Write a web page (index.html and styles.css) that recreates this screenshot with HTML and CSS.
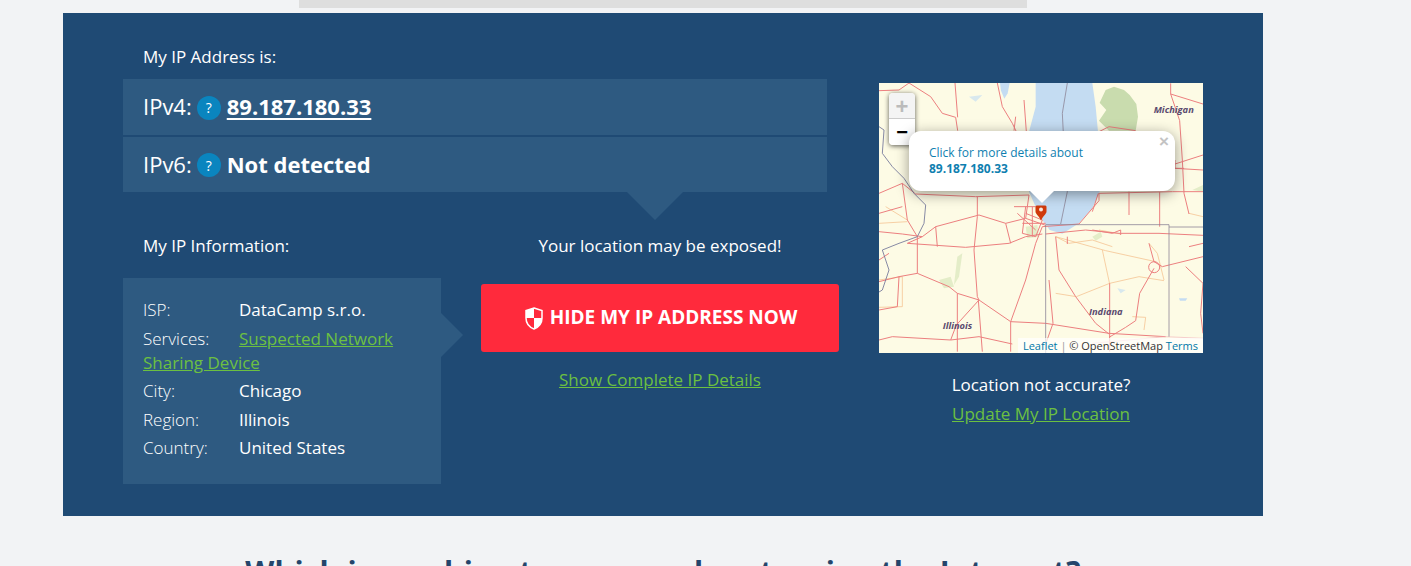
FILE: index.html
```html
<!DOCTYPE html>
<html lang="en">
<head>
<meta charset="utf-8">
<title>My IP Address</title>
<link rel="stylesheet" href="styles.css">
</head>
<body>
<div class="page">
  <div class="ad-strip"></div>
  <section class="panel">
    <div class="main">
      <h2 class="label">My IP Address is:</h2>
      <div class="ip-box">
        <div class="ip-row">
          <span class="ip-kind">IPv4:</span>
          <span class="help">?</span>
          <a class="ip-value" href="#">89.187.180.33</a>
        </div>
        <div class="ip-row">
          <span class="ip-kind">IPv6:</span>
          <span class="help">?</span>
          <strong class="ip-none">Not detected</strong>
        </div>
      </div>
      <div class="lower">
        <div class="info-col">
          <h2 class="label info-title">My IP Information:</h2>
          <div class="info-box">
            <p class="info-row"><span class="key">ISP:</span>DataCamp s.r.o.</p>
            <p class="info-row"><span class="key">Services:</span><a class="green" href="#">Suspected Network Sharing Device</a></p>
            <p class="info-row"><span class="key">City:</span>Chicago</p>
            <p class="info-row"><span class="key">Region:</span>Illinois</p>
            <p class="info-row"><span class="key">Country:</span>United States</p>
          </div>
        </div>
        <div class="cta-col">
          <p class="label warn">Your location may be exposed!</p>
          <a class="hide-btn" href="#">
            <svg class="shield" viewBox="0 0 18 23" aria-hidden="true">
              <path d="M9 1 L17 3.600 V11 C17 16.500 13.500 20.200 9 22 C4.500 20.200 1 16.500 1 11 V3.600 Z" fill="none" stroke="#fff" stroke-width="1.500"/>
              <path d="M9 1 L1 3.600 V11 H9 Z M9 11 H17 C17 16.500 13.500 20.200 9 22 Z" fill="#fff"/>
            </svg>
            <span class="btn-text">HIDE MY IP ADDRESS NOW</span>
          </a>
          <a class="green details" href="#">Show Complete IP Details</a>
        </div>
      </div>
    </div>
    <aside class="side">
      <div class="map">
        <svg class="map-art" viewBox="0 9 972 810" aria-hidden="true">
          <rect x="0" y="9" width="972" height="810" fill="#fdfbe5"/>
          <path d="M680 30 L705 20 L735 30 L752 45 L772 72 L777 110 L770 152 L690 152 L660 122 L682 90 L662 68 Z" fill="#c9dcae"/>
          <g fill="#e4edc8">
            <path d="M180 600 L215 590 L225 620 L195 625 Z"/>
            <path d="M440 440 L475 435 L480 470 L445 475 Z"/>
            <path d="M640 470 L665 455 L670 470 L650 482 Z"/>
            <path d="M940 330 L972 315 V335 Z"/>
            <path d="M235 530 L250 520 L240 590 L225 615 Z"/>
          </g>
          <path d="M470 9 H640 L650 80 L657 155 L662 335 L640 385 L600 430 L550 461 L512 450 L490 420 L470 380 L450 335 V155 L470 80 Z" fill="#c4dcf2"/>
          <path d="M363 9 H392 L386 40 L376 56 L366 32 Z" fill="#c4dcf2"/>
          <path d="M900 655 H925 L920 662 H903 Z" fill="#c4dcf2"/>
          <path d="M270 50 L310 45 L290 65 Z M715 625 L740 630 L725 640 Z" fill="#d8e8ee"/>
          <g fill="none" stroke="#f5c493" stroke-width="2.400">
            <path d="M530 470 L680 512 L830 545"/>
            <path d="M670 510 L692 612"/>
            <path d="M530 640 L592 650 L692 610 L780 590 L855 602"/>
            <path d="M0 600 L70 590 V680 L0 682"/>
            <path d="M930 400 L972 410"/>
            <path d="M660 450 L725 462"/>
            <path d="M760 710 L800 712 L795 750"/>
            <path d="M530 470 L570 490 L640 480 L700 500"/>
            <path d="M810 490 L835 520 L855 600"/>
            <path d="M20 380 L85 420 M0 430 L85 425"/>
          </g>
          <g fill="none" stroke="#ec7f7f" stroke-width="3" stroke-linejoin="round">
            <path d="M0 455 L70 462 L130 470 L170 440 L300 405 L380 430 L440 415 L500 436"/>
            <path d="M0 340 L70 310 L110 342 L290 350 L450 345 L440 415"/>
            <path d="M295 350 V410 L285 510 L295 650 L300 660 L235 640 L210 620 L115 580 V470 L85 420 L70 310"/>
            <path d="M300 660 L395 725 L500 730 L690 760 L860 770"/>
            <path d="M395 725 L440 600 L470 490 L490 440"/>
            <path d="M85 490 L130 470 M85 490 L260 502 L390 490 L440 470 L490 462"/>
            <path d="M380 430 L395 490"/>
            <path d="M300 660 L232 735 L215 780 L300 770 L400 792"/>
            <path d="M235 640 V815"/>
            <path d="M298 660 L310 815"/>
            <path d="M395 725 V815"/>
            <path d="M530 470 L540 570 L590 650 L650 730 L690 762"/>
            <path d="M692 610 V815"/>
            <path d="M510 600 L522 730 L500 792"/>
            <path d="M825 545 L850 560 L972 530"/>
            <path d="M825 565 L782 640 L770 722 L740 742 L690 772"/>
            <path d="M810 490 L825 545 A16 16 0 1 0 826 578 A16 16 0 0 0 825 545"/>
            <path d="M500 462 L620 450 L720 460 L840 460 L972 466"/>
            <path d="M490 440 L600 432 L660 362 V340 L880 335 L972 335"/>
            <path d="M842 336 V440"/>
            <path d="M90 9 L155 50 L190 100 L230 112 L236 152"/>
            <path d="M228 9 L236 112"/>
            <path d="M355 9 L370 80 L400 130 L412 155"/>
            <path d="M410 110 L405 152"/>
            <path d="M435 60 L442 155"/>
            <path d="M0 32 L60 30 L90 9"/>
            <path d="M875 10 V42 L902 122 L910 240 L915 340 L930 402"/>
            <path d="M875 42 L972 72"/>
            <path d="M888 240 V265 H915 M888 252 L972 225 M888 265 L972 270"/>
            <path d="M0 605 L60 590 L115 580 M60 590 L55 680 L0 690"/>
            <path d="M972 610 L965 700 L972 760"/>
            <path d="M440 380 L430 460 L470 470 L490 420 L440 400 M405 380 H470 M430 430 H500 M415 400 L470 450 M460 380 V470"/>
            <path d="M565 470 V492 M640 450 L700 460 L725 450 V465"/>
            <path d="M0 780 L40 770 L215 780"/>
            <path d="M750 335 V405 M658 340 L640 395"/>
            <path d="M660 155 L690 140 L770 152"/>
            <path d="M170 440 L175 500 M0 540 L30 520 M0 400 L70 380"/>
            <path d="M930 500 L972 490 M920 560 L972 610"/>
          </g>
          <path d="M640 790 L860 770 L972 775" fill="none" stroke="#f3b6c0" stroke-width="2"/>
          <g fill="none" stroke="#8d8597" stroke-width="2.400">
            <path d="M565 9 L550 100 L555 200 L565 335 L545 432"/>
            <path d="M870 441 H972"/>
            <path d="M500 819 V434 H870 V770"/>
          </g>
          <path d="M0 140 L15 150 L10 220 L40 260 L75 295 L105 340 L140 375 L135 430 L115 470 L60 490 L10 510 L30 570 L10 630 L0 636" fill="none" stroke="#74779a" stroke-width="2.600"/>
          <g class="map-place">
            <text x="824" y="99">Michigan</text>
            <text x="630" y="704">Indiana</text>
            <text x="191" y="747">Illinois</text>
          </g>
        </svg>
        <div class="zoom-ctl">
          <span class="zoom-btn zoom-off">+</span>
          <span class="zoom-btn">−</span>
        </div>
        <svg class="pin" viewBox="0 0 12 16" aria-hidden="true">
          <path d="M1.500 0.500 H10.500 L11.500 1.500 V6.500 C11.500 9 8 11 6 15.500 C4 11 0.500 9 0.500 6.500 V1.500 Z" fill="#cf3a0c"/>
          <circle cx="6" cy="4.500" r="2" fill="#f6e7df"/>
        </svg>
        <div class="popup">
          <span class="popup-x">×</span>
          <p class="popup-text">Click for more details about<br><b>89.187.180.33</b></p>
          <span class="popup-tip"></span>
        </div>
        <div class="attrib"><a href="#">Leaflet</a> <span class="sep">|</span> © OpenStreetMap <a href="#">Terms</a></div>
      </div>
      <p class="label accuracy">Location not accurate?</p>
      <a class="green update" href="#">Update My IP Location</a>
    </aside>
  </section>
  <h2 class="next-title">Which is machine to secure when touring the Internet?</h2>
</div>
</body>
</html>
```
FILE: styles.css
```css
* { box-sizing: border-box; }
html, body { margin: 0; height: 100%; overflow: hidden; }
body {
  background: #f2f3f5;
  font-family: "Open Sans", "Liberation Sans", sans-serif;
  color: #fff;
}
.page { width: 1200px; margin-left: 63px; }
.ad-strip { width: 728px; height: 8px; margin: 0 auto 5px; background: #dedede; }
.panel {
  display: flex;
  height: 503px;
  padding: 32px 60px;
  background: #1f4a74;
}
.main { width: 716px; }
.label { margin: 0; font-size: 17px; font-weight: 400; line-height: 24px; }
.main > .label { margin-left: 20px; margin-bottom: 10px; }
.ip-box { position: relative; width: 704px; }
.ip-box::after {
  content: "";
  position: absolute;
  left: 504px;
  top: 100%;
  border: 28px solid transparent;
  border-top-color: #2e5a81;
  border-bottom: 0;
}
.ip-row {
  display: flex;
  align-items: center;
  height: 56px;
  padding-left: 20px;
  background: #2e5a81;
  font-size: 22px;
}
.ip-row + .ip-row { height: 55px; margin-top: 2px; }
.ip-kind { padding-bottom: 2px; font-weight: 400; }
.help {
  display: flex;
  align-items: center;
  justify-content: center;
  width: 24px;
  height: 24px;
  margin: 1px 6px 0 5px;
  border-radius: 50%;
  background: #0a85bf;
  font-size: 14px;
  font-weight: 400;
}
.ip-value { padding-bottom: 2px; color: #fff; font-weight: 700; text-decoration: underline; text-underline-offset: 3px; }
.ip-none { padding-bottom: 2px; font-weight: 700; }
.lower { display: flex; gap: 40px; margin-top: 42px; }
.info-col { width: 318px; }
.info-title { margin: 0 0 20px 20px; }
.info-box {
  position: relative;
  height: 206px;
  padding: 20px 20px 0;
  background: #2e5a81;
  font-size: 17px;
  line-height: 24px;
}
.info-box::after {
  content: "";
  position: absolute;
  left: 100%;
  top: 35px;
  border: 22px solid transparent;
  border-left-color: #2e5a81;
  border-right: 0;
}
.info-row { margin: 0 0 4.500px; }
.key { display: inline-block; width: 96px; font-weight: 300; }
.green { color: #6cc041; text-decoration: underline; font-size: 17px; line-height: 24px; }
.cta-col { display: flex; flex-direction: column; align-items: center; width: 358px; }
.warn { margin-bottom: 26px; }
.hide-btn {
  display: flex;
  align-items: center;
  justify-content: center;
  gap: 7px;
  width: 100%;
  height: 68px;
  padding-left: 2px;
  border-radius: 3px;
  background: #ff2a3c;
  color: #fff;
  font-size: 19px;
  font-weight: 700;
  text-decoration: none;
}
.btn-text { padding-bottom: 3px; }
.shield { width: 18px; height: 23px; }
.details { margin-top: 16px; }
.side { display: flex; flex-direction: column; align-items: center; width: 324px; margin-left: 40px; padding-top: 38px; }
.map { position: relative; width: 324px; height: 270px; overflow: hidden; flex: none; }
.map-art { display: block; width: 324px; height: 270px; }
.map-place text {
  font-family: "Open Sans", sans-serif;
  font-size: 28px;
  font-weight: 700;
  font-style: italic;
  fill: #5a4a6e;
}
.zoom-ctl {
  position: absolute;
  left: 10px;
  top: 10px;
  width: 26px;
  border-radius: 4px;
  overflow: hidden;
  box-shadow: 0 1px 5px rgba(0, 0, 0, .65);
}
.zoom-btn {
  display: block;
  height: 26px;
  background: #fff;
  color: #000;
  font: 700 20px/27px "Liberation Sans", sans-serif;
  text-align: center;
}
.zoom-off { background: #f4f4f4; color: #bbb; border-bottom: 1px solid #ccc; font-size: 22px; line-height: 27px; }
.pin { position: absolute; left: 156px; top: 122px; width: 12px; height: 16px; }
.popup {
  position: absolute;
  left: 30px;
  top: 48px;
  width: 266px;
  height: 60px;
  padding: 14px 20px;
  border-radius: 12px;
  background: #fff;
  box-shadow: 0 3px 14px rgba(0, 0, 0, .4);
}
.popup-text { margin: 0; color: #0f7fb0; font-size: 12px; line-height: 16px; }
.popup-x {
  position: absolute;
  right: 6px;
  top: 2px;
  color: #c3c3c3;
  font: 700 17px/18px "Liberation Sans", sans-serif;
}
.popup-tip {
  position: absolute;
  left: 121px;
  top: 100%;
  border: 12px solid transparent;
  border-top-color: #fff;
  border-bottom: 0;
}
.attrib {
  position: absolute;
  right: 0;
  bottom: 0;
  padding: 0 5px;
  background: rgba(255, 255, 255, .7);
  color: #333;
  font-size: 11px;
  line-height: 15px;
}
.attrib a { color: #0078a8; text-decoration: none; }
.sep { color: #999; }
.accuracy { margin-top: 20px; }
.update { margin-top: 5px; }
.next-title {
  margin: 36px 0 0;
  color: #24456b;
  font-size: 30px;
  font-weight: 700;
  line-height: 40px;
  letter-spacing: .25px;
  text-align: center;
}
```
